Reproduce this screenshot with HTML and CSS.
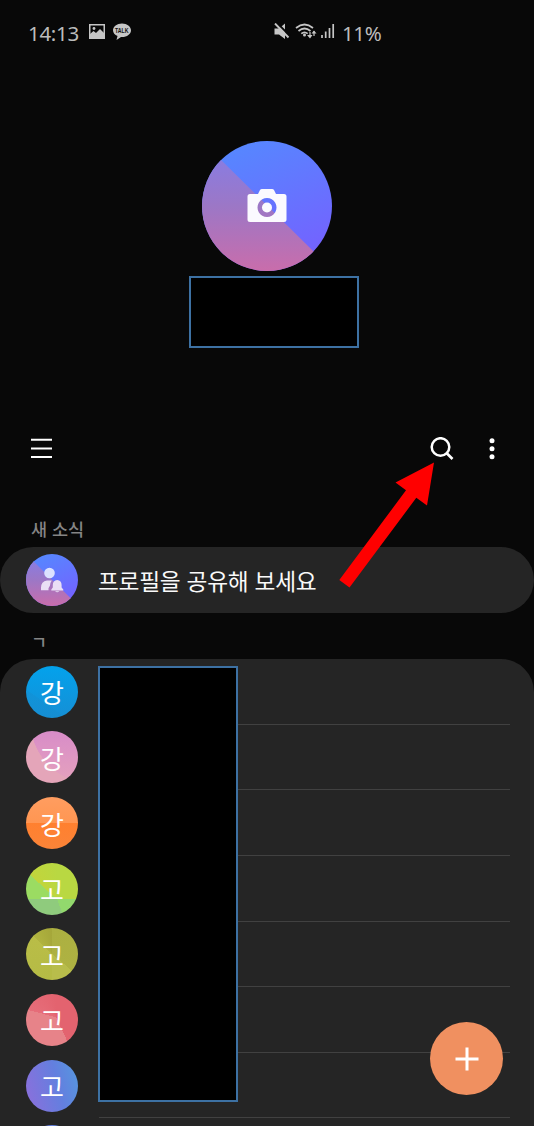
FILE: index.html
```html
<!DOCTYPE html>
<html lang="ko">
<head>
<meta charset="utf-8">
<title>연락처</title>
<link rel="stylesheet" href="styles.css">
</head>
<body>
<div class="screen">
  <header class="status">
    <span class="clock">14:13</span>
    <svg class="notices" width="44" height="20" viewBox="0 0 44 20">
      <path d="M0 1h16v15H0zM1.500 2.500v12h13v-12z" fill="#c6c6c6" fill-rule="evenodd"/>
      <path d="M1 15V11l3.500-3 2.500 2 4-4 4 4v5z" fill="#c6c6c6"/>
      <circle cx="5" cy="5.500" r="1.400" fill="#c6c6c6"/>
      <path d="M33 .5c5 0 9 3 9 6.800s-4 6.800-9 6.800h-1l-4.500 3 1-4c-2.700-1.200-4.500-3.300-4.500-5.800C24 3.500 28 .5 33 .5z" fill="#c6c6c6"/>
      <text class="talk" x="26" y="9.700" textLength="13.500" lengthAdjust="spacingAndGlyphs">TALK</text>
    </svg>
    <svg class="signals" width="62" height="20" viewBox="0 0 62 20">
      <path d="M.5 5.500H5L11 .5v15.500l-6-4.500H.5z" fill="#c6c6c6"/>
      <path d="M2-1l14 14" stroke="#080808" stroke-width="2"/>
      <path d="M1 .5l13.500 14" stroke="#c6c6c6" stroke-width="1.900"/>
      <g fill="none" stroke="#c6c6c6" stroke-width="1.700">
        <path d="M22 5q8.500-7 17 0M24.500 8q6-5 12 0M27.300 10.700q3.200-2.700 6.400 0"/>
        <path d="M36 9v5M40 13v-5" stroke-width="1.200"/>
        <path d="M48 15v-3M51.700 15V8.500M55.500 15V5M59.200 15V1"/>
      </g>
      <circle cx="30.500" cy="12" r="1.500" fill="#c6c6c6"/>
      <path d="M33 12h5.500L36 15.500zM37.500 10.500h5L40 7.500z" fill="#c6c6c6"/>
    </svg>
    <span class="battery">11%</span>
  </header>

  <section class="profile">
    <div class="photo">
      <svg width="40" height="36" viewBox="0 0 40 36">
        <path fill="#fbfaff" fill-rule="evenodd" d="M3 6h8l2-4q.6-1 2-1h10q1.400 0 2 1l2 4h8q2.500 0 2.500 2.500v23q0 2.500-2.500 2.500H3Q.5 34 .5 31.500v-23Q.5 6 3 6zM20 10a9.500 9.500 0 1 0 .01 0z"/>
        <circle cx="20" cy="19.500" r="5" fill="#fbfaff"/>
      </svg>
    </div>
    <div class="name-mask"></div>
  </section>

  <nav class="toolbar">
    <svg width="22" height="22" viewBox="0 0 22 22"><path d="M0 1.700h21M0 10.500h21M0 19h21" stroke="#fff" stroke-width="2.100"/></svg>
    <svg class="search" width="24" height="25" viewBox="0 0 24 25" fill="none" stroke="#fff"><circle cx="10.500" cy="10" r="8.800" stroke-width="2.500"/><path d="M16.500 16l6 6" stroke-width="2.700"/></svg>
    <svg width="6" height="22" viewBox="0 0 6 22" fill="#fff"><circle cx="3" cy="2.700" r="2.500"/><circle cx="3" cy="10.700" r="2.500"/><circle cx="3" cy="18.700" r="2.500"/></svg>
  </nav>

  <h2 class="heading">새 소식</h2>
  <div class="news">
    <div class="avatar share">
      <svg width="26" height="26" viewBox="0 0 26 26" fill="#eadff5">
        <circle cx="10.500" cy="6" r="5.300" fill="#dce2ff"/>
        <path d="M2 23.300v-2.500q0-6.500 6-7.300h4.800q-1.800 2.500-1.800 5l-1.500 2.800v2z"/>
        <path d="M18.200 13q-4.400.6-4.400 5v2.500L12.300 22.500v.9h12v-.9L22.600 20.500V18q0-4.400-4.400-5zM16 24.300h4.400q-2.200 2-4.400 0z"/>
      </svg>
    </div>
    <span class="news-text">프로필을 공유해 보세요</span>
  </div>

  <h2 class="heading initial">ㄱ</h2>
  <ul class="contacts">
    <li class="contact"><span class="avatar blue">강</span></li>
    <li class="contact"><span class="avatar pink">강</span></li>
    <li class="contact"><span class="avatar orange">강</span></li>
    <li class="contact"><span class="avatar lime">고</span></li>
    <li class="contact"><span class="avatar olive">고</span></li>
    <li class="contact"><span class="avatar red">고</span></li>
    <li class="contact"><span class="avatar violet">고</span></li>
    <li class="contact"><span class="avatar violet"></span></li>
  </ul>

  <div class="list-mask"></div>
  <svg class="arrow" width="96" height="126" viewBox="0 0 96 126"><path d="M95 0.500L88 43.500 77.300 35.800 10.500 125.500 .3 118 67 28.300 56.500 20.500z" fill="#f00"/></svg>
  <button class="add" aria-label="추가"><svg width="24" height="24" viewBox="0 0 24 24"><path d="M0.500 12h23M12 .5v23" stroke="#fff" stroke-width="3"/></svg></button>
</div>
</body>
</html>
```
FILE: styles.css
```css
* { box-sizing: border-box; }
body { margin: 0; background: #080808; }
.screen {
  position: relative;
  width: 534px;
  height: 1126px;
  overflow: hidden;
  background: #080808;
  color: #fafafa;
  font-family: "Noto Sans CJK KR", sans-serif;
}
.status {
  display: flex;
  align-items: center;
  height: 66px;
  padding-left: 28px;
  color: #bcbcbc;
  font-family: "Noto Sans", sans-serif;
  font-size: 20.500px;
  line-height: 30px;
}
.clock { width: 61px; letter-spacing: -.3px; }
.notices { margin-right: 141px; }
.talk { font: bold 6.500px "Liberation Sans", sans-serif; fill: #111; }
.battery { margin-left: 6px; letter-spacing: -.4px; }
.profile { display: flex; flex-direction: column; align-items: center; height: 368px; padding-top: 75px; }
.photo {
  display: flex;
  align-items: center;
  justify-content: center;
  width: 130px;
  height: 130px;
  border-radius: 50%;
}
.photo, .share { position: relative; overflow: hidden; background: linear-gradient(155deg, #528cff, #7363ff 85%); }
.photo::before, .share::before {
  content: "";
  position: absolute;
  inset: 0;
  background: linear-gradient(#8a7ce0 15%, #9c77c6 50%, #c96dab);
  clip-path: polygon(0 0, 3% 3%, 102% 101%, 0 101%);
}
.photo svg, .share svg { position: relative; }
.name-mask { flex: none; width: 170px; height: 72px; margin: 5px 0 0 14px; border: 2px solid #3d71a3; background: #000; }
.toolbar { display: flex; align-items: center; height: 30px; padding: 0 39px 0 31px; }
.search { margin: 0 35px 0 auto; }
.heading { margin: 0; height: 83px; padding: 52px 0 0 31px; color: #858585; font-size: 17.500px; font-weight: 500; line-height: 26px; }
.news { display: flex; align-items: center; height: 66px; padding-left: 26px; gap: 20px; border-radius: 33px; background: #252525; }
.news-text { padding-top: 2px; font-size: 22.700px; line-height: 32px; letter-spacing: -.25px; }
.initial { height: 46px; padding-top: 16px; }
.contacts { margin: 0; padding: 0 24px 0 26px; height: 520px; list-style: none; border-radius: 33px 33px 0 0; background: #252525; }
.contact { display: flex; align-items: center; height: 65.640px; }
.contact::after { content: ""; flex: 1; align-self: flex-end; height: 1px; margin-left: 21px; background: #414141; }
.avatar {
  flex: none;
  display: flex;
  align-items: center;
  justify-content: center;
  width: 52px;
  height: 52px;
  border-radius: 50%;
  color: #fff;
  font-size: 26px;
  line-height: 38px;
}
.contact .avatar { padding-top: 1px; }
.blue { background: linear-gradient(35deg, #168ccf66 32%, transparent 32.500%), linear-gradient(#03a2ec, #168fd5); }
.pink { background: radial-gradient(circle at 130% -20%, transparent 63px, #e4a5b9 63.500px), linear-gradient(#d88cc8, #e5a2bd); }
.orange { background: linear-gradient(#ff9d60, #ff9652 50%, #ff802f 50%, #fb8438); }
.lime { background: conic-gradient(from 0deg at 60% 70%, #b9d842 0 90deg, #92d96d 90deg 160deg, #8fcb7d 160deg 270deg, #9bdc62 270deg 312deg, #c2d53b 312deg, #b9d842); }
.olive { background: conic-gradient(from 0deg, #acb041, #aeb242 130deg, #b8bd4b 130deg 180deg, #b5bb45 180deg, #b9bd47 315deg, #b0b33f 315deg, #a5a73a); }
.red { background: conic-gradient(from 0deg at 58% 45%, #e3636f 0 155deg, #e78389 155deg 285deg, #e66d79 285deg, #e3636f); }
.violet { background: linear-gradient(75deg, #8771dc 10%, #637fdf 60%, #5599df); }
.list-mask { position: absolute; left: 98px; top: 666px; width: 140px; height: 436px; border: 2px solid #3d71a3; background: #000; }
.arrow { position: absolute; left: 339px; top: 462px; }
.add {
  position: absolute;
  left: 430px;
  top: 1022px;
  display: flex;
  align-items: center;
  justify-content: center;
  width: 73px;
  height: 73px;
  padding: 0;
  border: 0;
  border-radius: 50%;
  background: #f09060;
}
```
